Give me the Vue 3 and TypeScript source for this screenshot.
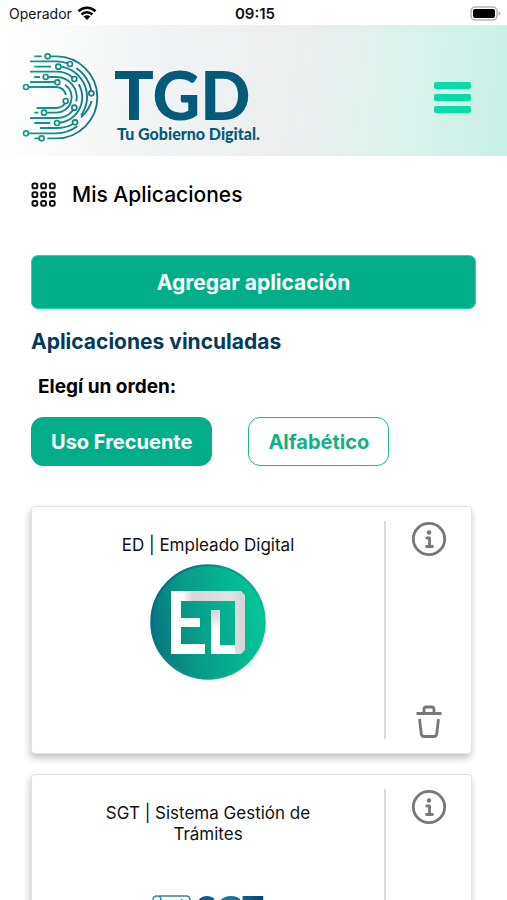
<script setup lang="ts">
import { ref } from 'vue'

type Order = 'frecuente' | 'alfabetico'

interface LinkedApp {
  id: string
  title: string
}

const order = ref<Order>('frecuente')

const orders: { id: Order; label: string }[] = [
  { id: 'frecuente', label: 'Uso Frecuente' },
  { id: 'alfabetico', label: 'Alfabético' },
]

const apps: LinkedApp[] = [
  { id: 'ed', title: 'ED | Empleado Digital' },
  { id: 'sgt', title: 'SGT | Sistema Gestión de Trámites' },
]

const gridDots = [0, 1, 2, 3, 4, 5, 6, 7, 8]

const nodes: [number, number][] = [
  [113, 49], [180, 72], [145, 80], [107, 111], [193, 117], [142, 127], [48, 141], [244, 160],
  [167, 183], [193, 203], [102, 218], [195, 247], [141, 249], [48, 280], [95, 295],
]
</script>

<template>
  <div class="screen">
    <div class="status">
      <span class="carrier">
        Operador
        <svg class="wifi" viewBox="0 0 20 15" aria-hidden="true">
          <path d="M1.5 5.2a12.2 12.2 0 0 1 17 0M4.6 8.5a7.7 7.7 0 0 1 10.8 0" fill="none" stroke="#000" stroke-width="2.6" />
          <path d="M6.6 10.6a4.8 4.8 0 0 1 6.8 0L10 14z" />
        </svg>
      </span>
      <span class="clock">09:15</span>
      <svg class="battery" viewBox="0 0 31 15" aria-hidden="true">
        <rect x="1" y="1" width="26" height="13" rx="4" fill="#fff" stroke="#b5b5b5" stroke-width="1.5" />
        <rect x="3" y="3" width="22" height="9" rx="2" />
        <path d="M28.5 5v5q2-1 2-2.5t-2-2.5z" fill="#b5b5b5" />
      </svg>
    </div>

    <header class="header">
      <a class="brand" href="#">
        <svg class="mark" viewBox="36 36 234 270" aria-hidden="true">
          <defs>
            <linearGradient id="markTone" gradientUnits="userSpaceOnUse" x1="40" y1="0" x2="265" y2="0">
              <stop offset="0" stop-color="#12a08a" />
              <stop offset="1" stop-color="#157284" />
            </linearGradient>
          </defs>
          <g fill="none" stroke="url(#markTone)" stroke-width="5.5">
            <path d="M73 49H95M120 49H139A123 123 0 0 1 139 295H112M73 295H88" />
            <path d="M60 64H138Q158 64 173 70M199 84A108 108 0 0 1 244 152M245 183A108 108 0 0 1 213 232M55 280H138A108 108 0 0 0 202 259" />
            <path d="M73 80H123M152 80A92 92 0 0 1 213 226M90 264H138Q170 264 189 252" />
            <path d="M60 95H138Q168 95 187 112M206 133A77 77 0 0 1 138 249H149M73 249H121" />
            <path d="M73 111H90M114 111H138A61 61 0 0 1 199 184M190 209Q172 234 138 234H60" />
            <path d="M60 126H134M165 134A46 46 0 0 1 138 218H110M73 218H85" />
            <path d="M55 141H138Q162 142 168 165M166 190Q156 204 138 204H80" />
          </g>
          <circle v-for="([x, y], i) in nodes" :key="i" :cx="x" :cy="y" r="7.5" fill="#f2f8f7" stroke="url(#markTone)" stroke-width="5" />
        </svg>
        <span class="words">
          <span class="name">TGD</span>
          <span class="tagline">Tu Gobierno Digital.</span>
        </span>
      </a>
      <button class="menu" type="button" aria-label="Menú">
        <span></span><span></span><span></span>
      </button>
    </header>

    <main class="content">
      <h1 class="title">
        <svg class="grid" viewBox="0 0 25 25" aria-hidden="true">
          <rect v-for="n in gridDots" :key="n" :x="1.5 + (n % 3) * 8.7" :y="1.5 + Math.floor(n / 3) * 8.7" width="4.8" height="4.8" rx="1.6" fill="none" stroke="#111" stroke-width="2" />
        </svg>
        Mis Aplicaciones
      </h1>

      <button class="add" type="button">Agregar aplicación</button>

      <h2 class="subtitle">Aplicaciones vinculadas</h2>
      <p class="hint">Elegí un orden:</p>
      <div class="orders">
        <button
          v-for="o in orders"
          :key="o.id"
          type="button"
          class="order"
          :class="{ active: order === o.id }"
          @click="order = o.id"
        >{{ o.label }}</button>
      </div>

      <div class="cards">
        <article v-for="app in apps" :key="app.id" class="card">
          <div class="body">
            <h3 class="app-name">{{ app.title }}</h3>
            <svg v-if="app.id === 'ed'" class="ed" viewBox="0 0 116 116" role="img" aria-label="Empleado Digital">
              <defs>
                <linearGradient id="edFill" x1="0" y1="0.6" x2="1" y2="0.4">
                  <stop offset="0" stop-color="#087580" />
                  <stop offset="0.35" stop-color="#079b86" />
                  <stop offset="1" stop-color="#05c898" />
                </linearGradient>
                <linearGradient id="edRim" x1="0" y1="0.3" x2="1" y2="0.6">
                  <stop offset="0" stop-color="#076b7d" />
                  <stop offset="1" stop-color="#08c394" />
                </linearGradient>
                <linearGradient id="edTop" x1="0" y1="0" x2="1" y2="0">
                  <stop offset="0.15" stop-color="#fff" />
                  <stop offset="0.3" stop-color="#d5d6d8" />
                  <stop offset="0.8" stop-color="#e2e2e4" />
                  <stop offset="1" stop-color="#d3d4d6" />
                </linearGradient>
                <linearGradient id="edStem" x1="0" y1="0" x2="0.3" y2="1">
                  <stop offset="0" stop-color="#cfd0d2" />
                  <stop offset="0.5" stop-color="#fff" />
                </linearGradient>
              </defs>
              <circle cx="58" cy="58" r="56.5" fill="url(#edFill)" stroke="url(#edRim)" stroke-width="2.5" />
              <path d="M21 27H91L95 31V86L91 90H82V81H85V37H31V54H50V63H31V80H55V90H21Z" fill="url(#edTop)" />
              <path d="M21 27H31L34 37H31V54H50V63H31V80H55V90H21Z" fill="#fff" />
              <path d="M61 46H70V81H85V90H61Z" fill="url(#edStem)" />
            </svg>
            <div v-else class="sgt">
              <svg class="scroll" viewBox="0 0 40 36" aria-hidden="true">
                <path d="M7 1H34Q38 1 38 5T34 9H31V30Q31 34 27 34H7Q3 34 3 30V27H9V9M1 5Q1 1 5 1T9 5V10H3Q1 9 1 5M34 9Q29 9 30 4" fill="none" stroke="#3a7fae" stroke-width="1.5" />
              </svg>
              <span class="sgt-name">SGT</span>
            </div>
          </div>
          <div class="actions">
            <button type="button" class="icon" aria-label="Información">
              <svg viewBox="0 0 36 36" aria-hidden="true">
                <circle cx="18" cy="18" r="15.7" fill="none" stroke="#777" stroke-width="2.8" />
                <circle cx="18" cy="11.5" r="2.2" fill="#777" />
                <path d="M15.8 17H18.5V25M15.5 25.5H21.5" fill="none" stroke="#777" stroke-width="2.8" stroke-linecap="round" stroke-linejoin="round" />
              </svg>
            </button>
            <button type="button" class="icon" aria-label="Eliminar">
              <svg viewBox="0 0 36 36" aria-hidden="true">
                <g fill="none" stroke="#777" stroke-width="2.8" stroke-linejoin="round">
                  <path d="M5.5 10.5H30.5M13 10V6.500Q13 4 15.500 4H20.500Q23 4 23 6.500V10" />
                  <path d="M8.5 16L10.3 31Q10.6 33.5 13 33.5H23Q25.4 33.5 25.7 31L27.5 16" />
                </g>
              </svg>
            </button>
          </div>
        </article>
      </div>
    </main>
  </div>
</template>

<style>
body {
  background: #fff;
}
</style>

<style scoped>
.screen {
  height: 100vh;
  overflow: hidden;
  font-family: Inter, "Liberation Sans", sans-serif;
  color: #111;
}
h1, h2, h3, p {
  margin: 0;
}
button {
  font-family: inherit;
  cursor: pointer;
}
.status {
  display: grid;
  grid-template-columns: 1fr auto 1fr;
  align-items: center;
  height: 25px;
  padding: 2px 6px 0 9px;
  box-sizing: border-box;
  font-size: 15px;
}
.carrier {
  display: flex;
  align-items: center;
  gap: 5px;
  font-size: 14px;
}
.wifi {
  width: 20px;
  height: 15px;
}
.clock {
  font-weight: 600;
}
.battery {
  width: 31px;
  height: 15px;
  justify-self: end;
}
.header {
  display: flex;
  align-items: center;
  justify-content: space-between;
  height: 131px;
  padding: 0 36px 0 22px;
  box-sizing: border-box;
  background: linear-gradient(97deg, #fff 0%, #f1f4f4 32%, #eceeee 58%, #dbf2eb 80%, #c6f1e6 100%);
}
.brand {
  display: flex;
  align-items: center;
  gap: 14px;
  padding-top: 12px;
  color: #045a78;
  text-decoration: none;
  font-family: Lato, sans-serif;
  font-weight: 900;
}
.mark {
  width: 78px;
  height: 90px;
}
.words {
  display: flex;
  flex-direction: column;
  padding-top: 16px;
}
.name {
  font-size: 66px;
  line-height: 58px;
}
.tagline {
  padding-left: 3px;
  font-size: 16px;
  line-height: 20px;
}
.menu {
  display: flex;
  flex-direction: column;
  gap: 5px;
  padding: 14px 0 0;
  border: 0;
  background: none;
}
.menu span {
  width: 37px;
  height: 7px;
  border-radius: 2px;
  background: #08dba9;
}
.content {
  padding: 20px 31px;
}
.title {
  display: flex;
  align-items: center;
  gap: 16px;
  height: 36px;
  font-size: 21px;
  font-weight: 500;
  color: #000;
}
.grid {
  width: 25px;
  height: 25px;
}
.add {
  display: block;
  width: 100%;
  height: 54px;
  margin-top: 43px;
  border: 1px solid #12dfab;
  border-radius: 7px;
  background: #02ae87;
  color: #fff;
  font-size: 21px;
  font-weight: 700;
}
.subtitle {
  margin-top: 18px;
  color: #043a5b;
  font-size: 21px;
  font-weight: 700;
  line-height: 30px;
}
.hint {
  margin: 17px 0 17px 7px;
  font-size: 19px;
  font-weight: 700;
  line-height: 26px;
  color: #000;
}
.orders {
  display: flex;
  gap: 36px;
}
.order {
  height: 49px;
  padding: 0 19px;
  border: 1px solid #22b48f;
  border-radius: 12px;
  background: #fff;
  color: #10b088;
  font-size: 20px;
  font-weight: 700;
}
.order.active {
  background: #02ae87;
  border-color: #02ae87;
  color: #fff;
}
.cards {
  display: flex;
  flex-direction: column;
  gap: 20px;
  margin: 40px 4px 0 0;
}
.card {
  display: flex;
  min-height: 248px;
  padding: 14px 0;
  box-sizing: border-box;
  border: 1px solid #e2e2e2;
  border-radius: 4px;
  background: #fff;
  box-shadow: -1px 4px 7px rgba(0, 0, 0, 0.24);
}
.body {
  flex: 1;
  display: flex;
  flex-direction: column;
  align-items: center;
  padding: 14px 60px 0;
  border-right: 2px solid #ddd;
}
.app-name {
  font-size: 17px;
  font-weight: 400;
  line-height: 21px;
  text-align: center;
}
.ed {
  width: 116px;
  height: 116px;
  margin-top: 8px;
}
.sgt {
  display: flex;
  align-items: flex-start;
  gap: 4px;
  margin-top: 50px;
}
.scroll {
  width: 40px;
  height: 36px;
}
.sgt-name {
  font-family: Lato, sans-serif;
  font-size: 36px;
  font-weight: 900;
  line-height: 26px;
  color: transparent;
  background: linear-gradient(90deg, #0b5077, #1478a8 50%, #0b4066);
  background-clip: text;
}
.actions {
  display: flex;
  flex-direction: column;
  align-items: center;
  justify-content: space-between;
  width: 85px;
}
.icon {
  padding: 0;
  border: 0;
  background: none;
}
.icon svg {
  display: block;
  width: 36px;
  height: 36px;
}
</style>
